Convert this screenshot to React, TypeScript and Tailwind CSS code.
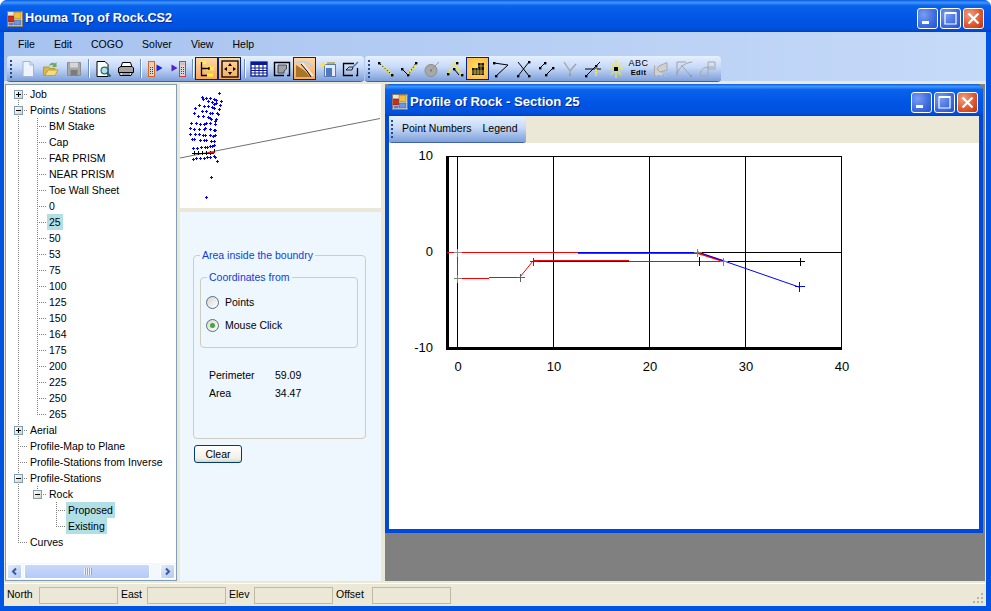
import type { ReactNode } from 'react';

const TREE = [
  { t: 'Job', l: 0, x: '+' },
  { t: 'Points / Stations', l: 0, x: '-' },
  { t: 'BM Stake', l: 1 },
  { t: 'Cap', l: 1 },
  { t: 'FAR PRISM', l: 1 },
  { t: 'NEAR PRISM', l: 1 },
  { t: 'Toe Wall Sheet', l: 1 },
  { t: '0', l: 1 },
  { t: '25', l: 1, sel: true },
  { t: '50', l: 1 },
  { t: '53', l: 1 },
  { t: '75', l: 1 },
  { t: '100', l: 1 },
  { t: '125', l: 1 },
  { t: '150', l: 1 },
  { t: '164', l: 1 },
  { t: '175', l: 1 },
  { t: '200', l: 1 },
  { t: '225', l: 1 },
  { t: '250', l: 1 },
  { t: '265', l: 1 },
  { t: 'Aerial', l: 0, x: '+' },
  { t: 'Profile-Map to Plane', l: 0 },
  { t: 'Profile-Stations from Inverse', l: 0 },
  { t: 'Profile-Stations', l: 0, x: '-' },
  { t: 'Rock', l: 1, x: '-' },
  { t: 'Proposed', l: 2, sel: true },
  { t: 'Existing', l: 2, sel: true },
  { t: 'Curves', l: 0 },
];

const PAD = ['pl-[22px]', 'pl-[41px]', 'pl-[60px]'];
const BOX = ['left-[8px]', 'left-[27px]', 'left-[46px]'];
const HLINE_X = [18, 37, 56];
const HLINE_END = [28, 47, 66];

// read off the zoomed map, 3x coords from (175,85)
const MAP_POINTS = [
  [133, 28], [82, 38], [94, 42], [106, 42], [84, 46], [118, 46], [124, 48], [139, 52], [100, 50], [112, 54], [122, 56], [136, 62],
  [118, 60], [73, 62], [87, 65], [100, 67], [112, 70], [118, 72], [61, 73], [133, 76], [82, 80], [94, 82], [106, 86], [112, 88],
  [126, 88], [130, 91], [58, 88], [70, 95], [85, 97], [100, 100], [106, 101], [124, 106], [109, 104], [121, 112], [49, 118], [64, 118],
  [76, 121], [88, 121], [94, 118], [106, 118], [121, 121], [46, 133], [58, 136], [73, 136], [88, 136], [91, 133], [106, 136], [118, 139],
  [121, 139], [46, 151], [61, 151], [73, 151], [85, 154], [91, 154], [106, 154], [115, 157], [121, 154], [52, 166], [58, 166], [76, 169],
  [88, 169], [94, 169], [109, 172], [118, 172], [55, 193], [67, 193], [79, 190], [91, 190], [97, 190], [106, 187], [112, 187], [118, 184],
  [55, 226], [64, 223], [76, 223], [88, 223], [97, 220], [106, 220], [118, 217], [121, 220], [127, 232], [109, 280], [94, 340],
];

function Cross({ x, y, c, r = 4 }: { x: number; y: number; c: string; r?: number }) {
  return <path d={`M${x - r} ${y}H${x + r}M${x} ${y - r}V${y + r}`} stroke={c} strokeWidth="1" fill="none" shapeRendering="crispEdges" />;
}

function WinButton({ kind }: { kind: 'min' | 'max' | 'close' }) {
  const bg =
    kind === 'close'
      ? 'bg-[radial-gradient(circle_at_30%_30%,#f0a080,#e2592e_55%,#bf3008)]'
      : 'bg-[radial-gradient(circle_at_30%_30%,#7a9df0,#3d6be0_60%,#2450d0)]';
  return (
    <div className={`w-[21px] h-[21px] ${bg} rounded-[3px] border border-white flex items-center justify-center`}>
      <svg width="15" height="15" viewBox="0 0 15 15">
        {kind === 'min' && <rect x="2" y="10" width="7" height="3" fill="#fff" />}
        {kind === 'max' && <path d="M2 2.5H13M2 1.5H13V13H2V1.5" stroke="#fff" strokeWidth="1.2" fill="none" />}
        {kind === 'close' && <path d="M2.5 2.5L12.5 12.5M12.5 2.5L2.5 12.5" stroke="#fff" strokeWidth="2.2" />}
      </svg>
    </div>
  );
}

function AppIcon() {
  return (
    <svg width="16" height="16" viewBox="0 0 16 16" className="shrink-0">
      <rect x="0.5" y="0.5" width="15" height="15" fill="#e8e4d8" stroke="#8a7a60" />
      <rect x="7" y="1.5" width="7" height="6" fill="#f2c040" stroke="#b08010" strokeWidth="0.6" />
      <rect x="1.5" y="5" width="5" height="6" fill="#d02a20" stroke="#801010" strokeWidth="0.6" />
      <rect x="7" y="9" width="7" height="5" fill="#6f96d8" stroke="#385a9a" strokeWidth="0.6" />
      <rect x="1.5" y="12" width="5" height="2.5" fill="#5a80c0" />
    </svg>
  );
}

function Grip() {
  return (
    <div className="flex flex-col gap-[2px] w-[8px] pl-[2px] shrink-0">
      {[0, 1, 2, 3, 4].map(i => (
        <div key={i} className="w-[2px] h-[2px] bg-[#2a4a86]" />
      ))}
    </div>
  );
}

function Sep() {
  return (
    <div className="w-[6px] h-[19px] flex justify-center shrink-0">
      <div className="w-px h-full bg-[#6a8cc8] shadow-[1px_0_0_#fff]" />
    </div>
  );
}

function Tb({ active, bright, children }: { active?: boolean; bright?: boolean; children: ReactNode }) {
  const on = bright
    ? 'bg-[radial-gradient(circle,#ffe25a,#ffb84a)] border border-[#0a2080]'
    : active
      ? 'bg-[linear-gradient(#ffd8a4,#f8a858)] border border-[#0a2080]'
      : '';
  return (
    <div className={`w-[23px] h-[23px] shrink-0 flex items-center justify-center ${on}`}>
      <svg width="18" height="18" viewBox="0 0 18 18" fill="none">
        {children}
      </svg>
    </div>
  );
}

function Toolbar({ w, children }: { w: string; children: ReactNode }) {
  return (
    <div className={`${w} h-[25px] flex items-center rounded-r-[4px] rounded-l-[3px] bg-[linear-gradient(#e6f0fe,#c6d9f7_45%,#7d9fda)] shadow-[0_1px_0_#3f62a8] shrink-0 pl-[1px]`}>
      {children}
    </div>
  );
}

function Dot({ x, y }: { x: number; y: number }) {
  return <rect x={x - 1} y={y - 1} width="2.4" height="2.4" fill="#000" />;
}

function Field() {
  return <div className="h-[17px] w-[79px] border border-[#bdb9a5] bg-[#ebe8d8] shrink-0" />;
}

function Radio({ on, label }: { on?: boolean; label: string }) {
  return (
    <div className="flex items-center h-[13px] pl-[5px]">
      <div className="w-[13px] h-[13px] rounded-full border border-[#4f6e96] bg-[linear-gradient(135deg,#d8d6cc,#fff)] flex items-center justify-center">
        {on && <div className="w-[5px] h-[5px] rounded-full bg-[#3fa83f]" />}
      </div>
      <span className="ml-[6px]">{label}</span>
    </div>
  );
}

function Group({ title, className, legend, children }: { title: string; className: string; legend: string; children: ReactNode }) {
  return (
    <fieldset className={`border border-[#cfcdc0] rounded-[4px] ${className}`}>
      <legend className={`${legend} px-[2px] text-[#0a3fd8] leading-[14px]`}>{title}</legend>
      {children}
    </fieldset>
  );
}

export default function App() {
  return (
    <div className="w-[991px] h-[611px] flex flex-col overflow-hidden font-['Liberation_Sans',sans-serif] text-[10.5px] text-black bg-[#0054e3] rounded-t-[7px]">
      {/* main title */}
      <div className="h-[32px] shrink-0 flex items-center pl-[7px] pr-[7px] pt-[5px] rounded-t-[7px] bg-[linear-gradient(#0a5ce0,#3d95ff_8%,#0a62ea_18%,#0055e6_60%,#0050dc_90%,#0042c0)]">
        <AppIcon />
        <span className="ml-[2px] font-bold text-[12.7px] text-white [text-shadow:1px_1px_#0a2a90]">Houma Top of Rock.CS2</span>
        <div className="ml-auto flex gap-[2px] -mt-[1px]">
          <WinButton kind="min" />
          <WinButton kind="max" />
          <WinButton kind="close" />
        </div>
      </div>

      <div className="flex-1 min-h-0 flex flex-col ml-[4px] mr-[5px] mb-[5px] bg-[#ebe8d8]">
        {/* menu + toolbars */}
        <div className="shrink-0 bg-[linear-gradient(90deg,#a6c2ef,#c6daf9)]">
          <div className="h-[24px] flex items-center pl-[14px] pt-px gap-[19px]">
            <span>File</span>
            <span>Edit</span>
            <span>COGO</span>
            <span>Solver</span>
            <span>View</span>
            <span>Help</span>
          </div>
          <div className="h-[25px] flex pl-[3px] gap-px items-center">
            <Toolbar w="w-[357px]">
              <Grip />
              <Tb>
                <path d="M4 1.5H11L14.5 5V16.5H4Z" fill="#eef3fc" stroke="#a3b4d2" />
                <path d="M11 1.5V5H14.5" stroke="#a3b4d2" />
              </Tb>
              <Tb>
                <path d="M1.5 7H7L8 8.5H13V15.5H1.5Z" fill="#d8b84a" stroke="#b8983a" />
                <path d="M3 15.5L6 10H16L13 15.5Z" fill="#f4dc78" stroke="#c0a040" />
                <path d="M7 6C8 2.5 11 2 13 3.5L14.5 2V7H10L11.5 5.5C10 4.5 8.5 5 7 6Z" fill="#6aa860" />
              </Tb>
              <Tb>
                <path d="M2.5 2.5H15.5V15.5H2.5Z" fill="#a8a8a8" stroke="#8c8c8c" />
                <rect x="5" y="2.5" width="8" height="5" fill="#d6d6d6" />
                <rect x="5.5" y="10" width="7" height="5.5" fill="#7c7c7c" />
              </Tb>
              <Sep />
              <Tb>
                <path d="M3 1.5H11L14 4.5V16.5H3Z" fill="#fff" stroke="#000" />
                <circle cx="10.5" cy="10.5" r="3.4" fill="#b6e0e8" stroke="#1f6f80" strokeWidth="1.2" />
                <path d="M13 13L16.5 16.5" stroke="#1f5f70" strokeWidth="2" />
              </Tb>
              <Tb>
                <path d="M5.5 2.5H13.5L15 7H4Z" fill="#fff" stroke="#000" />
                <path d="M1.5 8L4 6.5H15L16.5 8V12.5H1.5Z" fill="#a4a4a4" stroke="#000" />
                <path d="M2.5 12.5H15.5L14 15.5H3Z" fill="#e8e8e8" stroke="#000" />
                <path d="M5 14H13" stroke="#555" />
              </Tb>
              <Sep />
              <Tb>
                <rect x="2.5" y="1.5" width="6" height="15" fill="#d8d8d8" stroke="#d8641e" />
                <path d="M3.5 2.5H7.5V5H3.5Z" fill="#f6c9a8" />
                <path d="M4 7.5H7M4 9.5H7M4 11.5H7M4 13.5H7" stroke="#404040" strokeDasharray="1 1" />
                <path d="M10.5 4.5L16.5 8L10.5 11.5Z" fill="#2020d8" />
              </Tb>
              <Tb>
                <path d="M2.5 4.5L8.5 8L2.5 11.5Z" fill="#5a20c8" />
                <rect x="10.5" y="1.5" width="6" height="15" fill="#d8d8d8" stroke="#d83838" />
                <path d="M11.5 2.5H15.5V5H11.5Z" fill="#f0b0a8" />
                <path d="M12 7.5H15M12 9.5H15M12 11.5H15M12 13.5H15" stroke="#404040" strokeDasharray="1 1" />
              </Tb>
              <Sep />
              <Tb active>
                <rect x="1" y="1" width="7" height="3" fill="#fff040" />
                <rect x="8" y="6.5" width="8" height="4" fill="#fff040" />
                <rect x="9" y="13.5" width="6" height="3" fill="#fff040" />
                <path d="M3.5 2V15.5H9M3.5 8.5H11M11 7V10" stroke="#000" strokeWidth="1.3" />
              </Tb>
              <Tb active>
                <rect x="1" y="1" width="16" height="16" stroke="#000" strokeWidth="1.3" />
                <path d="M9 3L11 6H7ZM9 15L7 12H11ZM3 9L6 7V11ZM15 9L12 11V7Z" fill="#000" />
              </Tb>
              <Sep />
              <Tb>
                <rect x="1" y="2" width="16" height="14" fill="#fff" stroke="#0a1a90" strokeWidth="1.3" />
                <rect x="1" y="2" width="16" height="3" fill="#0a1a90" />
                <path d="M1 8H17M1 10.5H17M1 13H17M5 5V16M9 5V16M13 5V16" stroke="#0a1a90" />
              </Tb>
              <Tb>
                <path d="M11 15.5H1.5V2.5H16.5V15.5H14" stroke="#000" strokeWidth="1.4" />
                <path d="M5 5H13.5V9L11 11V13H5Z" fill="#a0a0a0" stroke="#303030" strokeWidth="0.8" />
              </Tb>
              <Tb active>
                <path d="M0 17V5L9 11L14 17Z" fill="#a87428" />
                <path d="M0 3C6 0 12 2 17 7" stroke="#c0d0e0" strokeWidth="2" />
                <path d="M6 3L12 10L17 16" stroke="#e8e8e8" strokeWidth="2" />
                <path d="M5 4L11 11L15 17" stroke="#000" />
              </Tb>
              <Tb>
                <rect x="5.5" y="4.5" width="11" height="12" fill="#e4ecfa" stroke="#5a7ab0" />
                <rect x="7" y="8" width="6" height="8" fill="#4f78c0" />
                <path d="M4 1L5 4L8 5L5 6L4 9L3 6L0 5L3 4Z" fill="#ffe040" />
                <path d="M8 3H16" stroke="#b0a040" strokeWidth="1.5" />
              </Tb>
              <Tb>
                <path d="M11 15.5H1.5V3.5H12M15.5 8V15.5H14" stroke="#000" strokeWidth="1.3" />
                <path d="M4 10L7 7H11L10 10Z" fill="#c0ccdc" stroke="#000" strokeWidth="0.8" />
                <path d="M11 7L16 2" stroke="#4a78c0" strokeWidth="1.4" />
              </Tb>
            </Toolbar>
            <Toolbar w="w-[356px]">
              <Grip />
              <Tb>
                <path d="M2 3L15 15" stroke="#000" />
                <path d="M4 5L14 14" stroke="#f8e820" strokeWidth="2" strokeDasharray="2 1" />
                <Dot x={2} y={3} />
                <Dot x={15} y={15} />
              </Tb>
              <Tb>
                <path d="M2 9L8 15L16 3" stroke="#000" />
                <path d="M8 14L16 4" stroke="#f8e820" strokeWidth="2" strokeDasharray="2 1" />
                <Dot x={2} y={9} />
                <Dot x={8} y={15} />
                <Dot x={16} y={3} />
              </Tb>
              <Tb>
                <circle cx="8" cy="10.5" r="6" fill="#a8a8a8" stroke="#8c8c8c" />
                <path d="M8 10L16 2" stroke="#9a9a9a" />
                <circle cx="8" cy="10.5" r="1" fill="#707070" />
              </Tb>
              <Tb>
                <path d="M2 14L8 3L16 15" stroke="#f8e820" strokeWidth="1.6" strokeDasharray="2 1" />
                <path d="M8 9L13 15" stroke="#000" />
                <Dot x={11} y={3} />
                <Dot x={8} y={9} />
                <Dot x={16} y={15} />
                <Dot x={2} y={14} />
              </Tb>
              <Tb bright>
                <path d="M3 8H9V3H15V15H3Z" fill="#101010" />
                <path d="M3 11H15M3 13H15M6 8V15M9 8V15M12 3V15M9 6H15" stroke="#f0d050" strokeWidth="0.7" />
              </Tb>
              <Tb>
                <path d="M2 3L16 5L4 16" stroke="#000" />
                <Dot x={2} y={3} />
                <Dot x={4} y={16} />
              </Tb>
              <Tb>
                <path d="M3 2L14 16M14 2L3 16" stroke="#000" />
                <Dot x={14} y={2} />
                <Dot x={3} y={16} />
                <Dot x={14} y={16} />
              </Tb>
              <Tb>
                <path d="M2 8L7 3M8 15L15 8" stroke="#000" />
                <Dot x={2} y={8} />
                <Dot x={7} y={3} />
                <Dot x={8} y={15} />
                <Dot x={15} y={8} />
              </Tb>
              <Tb>
                <path d="M3 2L9 11L15 4M9 11L9 16" stroke="#a0a0a0" strokeWidth="1.2" />
                <circle cx="9" cy="15" r="1.2" fill="#9a9a9a" />
              </Tb>
              <Tb>
                <path d="M1 9H17M2 16L16 2" stroke="#000" />
                <path d="M12 6V16" stroke="#f8e820" strokeWidth="2" strokeDasharray="2 1" />
                <Dot x={2} y={16} />
                <Dot x={12} y={6} />
              </Tb>
              <Tb>
                <path d="M9 0V18M2 9H16M4 3L14 15M14 3L4 15" stroke="#f8e820" strokeWidth="1.1" />
                <rect x="7" y="7" width="4" height="4" fill="#000" />
              </Tb>
              <div className="w-[23px] h-[23px] shrink-0 flex flex-col items-center justify-center leading-[9px] text-[9px] -mt-[1px]">
                <span className="tracking-[0.5px]">ABC</span>
                <span className="font-bold text-[7.5px] tracking-[0.3px]">Edit</span>
              </div>
              <Tb>
                <path d="M1.5 5.5L1.5 15.5H11M6 6L14 2.5V10L7 12L4 9Z" stroke="#a8a8a8" fill="#d0d0d0" strokeWidth="1" />
                <path d="M3 15.5H15" stroke="#c0c0c0" strokeDasharray="2 2" />
              </Tb>
              <Tb>
                <path d="M1 16V2H10M1 14C3 8 8 3 16 2M5 5L15 16" stroke="#a0a0a0" />
                <circle cx="15" cy="16" r="1" fill="#909090" />
              </Tb>
              <Tb>
                <path d="M1 16C1 10 5 7 9 7H15M9 2H16V9H9ZM1 16H9V7" stroke="#a8a8a8" />
              </Tb>
            </Toolbar>
          </div>
        </div>

        {/* body */}
        <div className="flex-1 min-h-0 flex pt-[3px] pb-[2px] pl-px pr-px">
          {/* tree */}
          <div className="w-[172px] shrink-0 border border-[#7f9db9] bg-white flex flex-col">
            <div className="relative flex-1 min-h-0 pt-px">
              <svg className="absolute left-0 top-0" width="170" height="478" viewBox="6 85 170 478">
                <g stroke="#808080" strokeDasharray="1 1" fill="none">
                  <path d="M18.5 94V542M37.5 118V414M37.5 486V494M56.5 502V526" />
                  {TREE.map((r, i) => (
                    <path key={r.t + i} d={`M${HLINE_X[r.l]} ${94.5 + i * 16}H${HLINE_END[r.l]}`} />
                  ))}
                </g>
              </svg>
              {TREE.map(r => (
                <div key={r.t} className={`relative h-4 flex items-center ${PAD[r.l]}`}>
                  {r.x && (
                    <div className={`absolute ${BOX[r.l]} top-[4px] w-[9px] h-[9px] border border-[#7f9db9] bg-[linear-gradient(135deg,#fff,#d8d4c4)] flex items-center justify-center`}>
                      <svg width="7" height="7" viewBox="0 0 7 7">
                        <path d={r.x === '+' ? 'M1 3.5H6M3.5 1V6' : 'M1 3.5H6'} stroke="#000" fill="none" />
                      </svg>
                    </div>
                  )}
                  <span className={`relative h-4 leading-4 px-[2px] whitespace-nowrap ${r.sel ? 'bg-[#b0e0e6]' : ''}`}>{r.t}</span>
                </div>
              ))}
            </div>
            <div className="h-[17px] shrink-0 flex items-center px-px gap-[2px] bg-[#f3f7fe]">
              <div className="w-[15px] h-[15px] rounded-[2px] bg-[linear-gradient(135deg,#e4ecfc,#b2c8f4)] border border-white flex items-center justify-center">
                <svg width="9" height="9" viewBox="0 0 9 9"><path d="M6 1.5L3 4.5L6 7.5" stroke="#3a5a9a" strokeWidth="2" fill="none" /></svg>
              </div>
              <div className="w-[126px] h-[15px] rounded-[2px] bg-[linear-gradient(#c8d8fa,#b4caf6)] border border-white flex items-center justify-center gap-px">
                {[0, 1, 2, 3].map(i => <div key={i} className="w-px h-[7px] bg-[#eef3fe] shadow-[1px_0_0_#8ea6d8]" />)}
              </div>
              <div className="flex-1" />
              <div className="w-[15px] h-[15px] rounded-[2px] bg-[linear-gradient(135deg,#e4ecfc,#b2c8f4)] border border-white flex items-center justify-center">
                <svg width="9" height="9" viewBox="0 0 9 9"><path d="M3 1.5L6 4.5L3 7.5" stroke="#3a5a9a" strokeWidth="2" fill="none" /></svg>
              </div>
            </div>
          </div>

          {/* map + area panel */}
          <div className="w-[201px] ml-[3px] shrink-0 flex flex-col">
            <div className="h-[124px] shrink-0 bg-white">
              <svg width="201" height="124" viewBox="180 85 201 124">
                <path d="M180 159L380 119.5" stroke="#707070" strokeWidth="1" />
                <g shapeRendering="crispEdges">
                  <path d="M192 154.5H214" stroke="#000" strokeWidth="1.5" />
                  <path d="M194.5 152V156M198.5 152V156M202.5 152V156M206.5 152V156M210.5 152V156M214.5 150V154" stroke="#000" />
                  <path d="M208 153.5H215" stroke="#e01010" />
                  {MAP_POINTS.map(([x, y], i) => {
                    const px = Math.round(x / 3) + 175;
                    const py = Math.round(y / 3) + 85;
                    return <path key={i} d={`M${px - 1} ${py + 0.5}H${px + 2}M${px + 0.5} ${py - 1}V${py + 2}`} stroke="#0000ff" />;
                  })}
                </g>
              </svg>
            </div>
            <div className="h-[4px] shrink-0" />
            <div className="flex-1 min-h-0 bg-[#eef6fe] pl-[13px] pt-[36px]">
              <Group title="Area inside the boundry" legend="ml-0" className="w-[173px] h-[191px] pl-[6px]">
                <Group title="Coordinates from" legend="ml-[6px]" className="w-[158px] h-[78px] mt-[8px]">
                  <div className="flex flex-col gap-[10px] pt-[12px]">
                    <Radio label="Points" />
                    <Radio on label="Mouse Click" />
                  </div>
                </Group>
                <div className="grid grid-cols-[66px_auto] pl-[9px] mt-[18px] leading-[18px]">
                  <span>Perimeter</span>
                  <span>59.09</span>
                  <span>Area</span>
                  <span>34.47</span>
                </div>
              </Group>
              <button className="block mt-[6px] ml-px w-[48px] h-[18px] rounded-[3px] border border-[#003c74] bg-[linear-gradient(#fff,#f0efe6_80%,#d8d4c4)] leading-none">Clear</button>
            </div>
          </div>

          {/* MDI area */}
          <div className="flex-1 min-w-0 ml-[4px] bg-[#808080] flex flex-col pr-[2px]">
            <div className="h-[449px] shrink-0 flex flex-col bg-[#0048d8] rounded-t-[7px] px-[4px] pb-[4px]">
              <div className="h-[32px] shrink-0 flex items-center pl-[7px] pr-[5px] pt-[4px] -mx-[4px] rounded-t-[7px] bg-[linear-gradient(#0a5ce0,#3d95ff_8%,#0a62ea_18%,#0055e6_60%,#0050dc_90%,#0042c0)]">
                <AppIcon />
                <span className="ml-[2px] font-bold text-[13.1px] text-white [text-shadow:1px_1px_#0a2a90]">Profile of Rock - Section 25</span>
                <div className="ml-auto flex gap-[2px]">
                  <WinButton kind="min" />
                  <WinButton kind="max" />
                  <WinButton kind="close" />
                </div>
              </div>
              <div className="h-[27px] shrink-0 bg-[#ebe8d8]">
                <div className="w-[137px] h-[26px] flex items-center rounded-r-[3px] rounded-bl-[3px] bg-[linear-gradient(#e6f0fe,#c6d9f7_45%,#7d9fda)] shadow-[0_1px_0_#3f62a8]">
                  <Grip />
                  <span className="ml-[5px] whitespace-nowrap">Point Numbers</span>
                  <span className="ml-[11px]">Legend</span>
                </div>
              </div>
              <div className="flex-1 min-h-0 bg-white">
                <svg width="590" height="385" viewBox="389 143 590 385" className="block text-[13px]">
                  <g stroke="#000" strokeWidth="1" fill="none" shapeRendering="crispEdges">
                    <path d="M447 156.5H841.5V348M457.5 156V348M553.5 156V348M649.5 156V348M745.5 156V348M447 252.5H841" />
                    <path d="M533 261.5H800" />
                  </g>
                  <rect x="446" y="156" width="3" height="193" fill="#000" />
                  <rect x="446" y="347" width="396" height="3" fill="#000" />
                  <g fill="none" stroke="#ff0000" strokeWidth="1">
                    <path d="M447 252.5H578M457.5 252V278M457 278.5H489M489 277.5H520" />
                    <path d="M533 260.5H629" />
                    <path d="M629 261.5H723" />
                    <path d="M578 253.5H698" />
                    <path d="M520 277L533 261" />
                    <path d="M698 253L723 261" strokeWidth="2" />
                  </g>
                  <g fill="none" stroke="#0000ff">
                    <path d="M578 252.5H698" shapeRendering="crispEdges" />
                    <path d="M698 252L799 287" />
                  </g>
                  <Cross x={457.5} y={252.5} c="#909090" />
                  <Cross x={457.5} y={278.5} c="#808080" />
                  <Cross x={520.5} y={277.5} c="#606060" />
                  <Cross x={533.5} y={261.5} c="#404040" />
                  <Cross x={697.5} y={252.5} c="#808080" />
                  <path d="M699.5 257V266" stroke="#000" shapeRendering="crispEdges" />
                  <Cross x={723.5} y={261.5} c="#808080" />
                  <Cross x={800.5} y={261.5} c="#000" />
                  <Cross x={799.5} y={286.5} c="#0000ff" r={5} />
                  <text x="433" y="160" textAnchor="end">10</text>
                  <text x="433" y="256" textAnchor="end">0</text>
                  <text x="433" y="352" textAnchor="end">-10</text>
                  <text x="458" y="371" textAnchor="middle">0</text>
                  <text x="554" y="371" textAnchor="middle">10</text>
                  <text x="650" y="371" textAnchor="middle">20</text>
                  <text x="746" y="371" textAnchor="middle">30</text>
                  <text x="842" y="371" textAnchor="middle">40</text>
                </svg>
              </div>
            </div>
          </div>
        </div>

        {/* status bar */}
        <div className="h-[23px] shrink-0 flex items-center pl-[3px] gap-[3px] relative border-t border-white">
          <span className="w-[29px]">North</span>
          <Field />
          <span className="w-[23px]">East</span>
          <Field />
          <span className="w-[22px]">Elev</span>
          <Field />
          <span className="w-[33px]">Offset</span>
          <Field />
          <svg className="absolute right-[2px] bottom-[2px]" width="12" height="12" viewBox="0 0 12 12">
            <path d="M9 1h2v2H9zM5 5h2v2H5zM9 5h2v2H9zM1 9h2v2H1zM5 9h2v2H5zM9 9h2v2H9z" fill="#b8b4a0" />
          </svg>
        </div>
      </div>
    </div>
  );
}
